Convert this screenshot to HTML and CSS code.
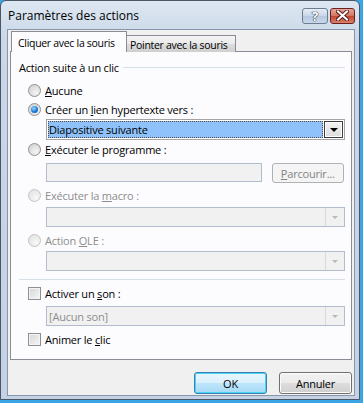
FILE: index.html
```html
<!DOCTYPE html>
<html lang="fr">
<head>
    <meta charset="UTF-8">
    <title>Paramètres des actions</title>
    <link rel="stylesheet" href="styles.css">
</head>
<body>
<div class="screen">
    <div class="window">
        <div class="titlebar">
            <span class="title">Paramètres des actions</span>
            <div class="caption">
                <span class="cbtn help">?</span>
                <span class="cbtn close">
                    <svg width="13" height="11" viewBox="0 0 13 11">
                        <path d="M2 1.5 L11 9.5 M11 1.5 L2 9.5" stroke="#5a1a1a" stroke-width="4" stroke-linecap="square"/>
                        <path d="M2 1.5 L11 9.5 M11 1.5 L2 9.5" stroke="#fff" stroke-width="2" stroke-linecap="square"/>
                    </svg>
                </span>
            </div>
        </div>
        <div class="client">
            <div class="tabs">
                <div class="tab active">Cliquer avec la souris</div>
                <div class="tab">Pointer avec la souris</div>
            </div>
            <div class="panel">
                <div class="group-head"><span>Action suite à un clic</span></div>

                <div class="opt r-aucune"><span class="radio"></span><span><u>A</u>ucune</span></div>
                <div class="opt r-lien"><span class="radio checked"></span><span>Créer un <u>l</u>ien hypertexte vers :</span></div>
                <div class="combo focus">
                    <div class="combo-value"><span>Diapositive suivante</span></div>
                    <div class="combo-btn"><span class="arrow"></span></div>
                </div>

                <div class="opt r-prog"><span class="radio"></span><span><u>E</u>xécuter le programme :</span></div>
                <div class="prog-row">
                    <div class="field"></div>
                    <div class="btn disabled"><u>P</u>arcourir...</div>
                </div>

                <div class="opt r-macro disabled"><span class="radio"></span><span>Exécuter la <u>m</u>acro :</span></div>
                <div class="combo disabled c-macro">
                    <div class="combo-value"></div>
                    <div class="combo-btn"><span class="arrow"></span></div>
                </div>

                <div class="opt r-ole disabled"><span class="radio"></span><span>Action <u>O</u>LE :</span></div>
                <div class="combo disabled c-ole">
                    <div class="combo-value"></div>
                    <div class="combo-btn"><span class="arrow"></span></div>
                </div>

                <div class="sep"></div>

                <div class="opt c-son"><span class="check"></span><span>Activer un <u>s</u>on :</span></div>
                <div class="combo disabled c-sound">
                    <div class="combo-value"><span>[Aucun son]</span></div>
                    <div class="combo-btn"><span class="arrow"></span></div>
                </div>
                <div class="opt c-anim"><span class="check"></span><span>Animer le <u>c</u>lic</span></div>
            </div>
            <div class="footer">
                <div class="btn default">OK</div>
                <div class="btn">Annuler</div>
            </div>
        </div>
    </div>
</div>
</body>
</html>
```

FILE: styles.css
```css
body {
    margin: 0;
    padding: 0;
    font-family: "Open Sans", "Noto Sans", sans-serif;
    font-size: 11px;
    letter-spacing: -0.2px;
    color: #000;
    background: #3aa6e6;
}

.screen {
    width: 363px;
    height: 403px;
    background: #3aa6e6; /* desktop showing behind the glass */
}

.window {
    width: 360px;
    height: 400px;
    box-sizing: border-box;
    border: 1px solid #4a5566;
    border-radius: 6px 6px 0 0;
    background: linear-gradient(#dde7f2, #c9d7e7 40px, #c3d2e4);
    padding: 0 4px 3px 6px;
    display: flex;
    flex-direction: column;
}

.titlebar {
    height: 28px;
    flex: none;
    display: flex;
    align-items: center;
    justify-content: space-between;
    padding-left: 1px;
}

.title {
    font-size: 12px;
    letter-spacing: 0;
    margin-top: 1px;
}

.caption {
    display: flex;
    gap: 2px;
    margin-top: 1px;
}

.cbtn {
    height: 14px;
    border: 1px solid #6d7c90;
    border-radius: 3px;
    display: flex;
    align-items: center;
    justify-content: center;
}

.help {
    width: 24px;
    background: linear-gradient(#e6eef8, #c8d6e8 50%, #b6c8de 51%, #c9d9ec);
    color: #fff;
    font-weight: bold;
    font-size: 13px;
    text-shadow: 0 0 1px #2c3a4c, 0 0 1px #2c3a4c, 0 0 1px #2c3a4c;
    line-height: 14px;
}

.close {
    width: 23px;
    border-color: #6b2020;
    background: linear-gradient(#e8a79a, #d27260 50%, #c2452d 51%, #d9816a);
}

.client {
    flex: 1;
    background: #f0f0f0;
    border: 1px solid #8796aa;
    padding: 1px 2px 0 2px;
    display: flex;
    flex-direction: column;
}

.tabs {
    display: flex;
    align-items: flex-end;
    padding-left: 1px;
    height: 21px;
    flex: none;
    position: relative;
    z-index: 1;
    margin-bottom: -1px;
}

.tab {
    width: 109px;
    min-width: 0;
    flex: none;
    height: 17px;
    box-sizing: border-box;
    border: 1px solid #898c95;
    border-left: none;
    border-bottom: none;
    background: linear-gradient(#f3f3f3, #ebebeb 50%, #dddddd 51%, #cfcfcf);
    display: flex;
    align-items: center;
    padding: 1px 0 0 3px;
    white-space: nowrap;
    overflow: hidden;
    font-size: 10.5px;
    letter-spacing: -0.3px;
}

.tab.active {
    width: 116px;
    height: 21px;
    background: #fcfcfe;
    border-left: 1px solid #898c95;
    padding: 2px 0 0 6px;
}

.panel {
    border: 1px solid #898c95;
    background: #fcfcfe;
    padding: 8px 6px 0 8px;
    height: 309px;
    box-sizing: border-box;
    flex: none;
}

.group-head {
    display: flex;
    align-items: center;
    height: 15px;
    white-space: nowrap;
}

.group-head::after {
    content: "";
    flex: 1;
    height: 1px;
    background: #d5dfe5;
    margin-left: 4px;
}

.opt {
    display: flex;
    align-items: center;
    height: 16px;
    padding-left: 9px;
    white-space: nowrap;
}

.opt.disabled {
    color: #8d8d8d;
}

.radio {
    width: 13px;
    height: 13px;
    box-sizing: border-box;
    border-radius: 50%;
    border: 1px solid #8e9090;
    background: radial-gradient(circle at 65% 70%, #f4f4f4, #d8d8d8 70%);
    margin-right: 4px;
    margin-top: 1px;
    display: flex;
    align-items: center;
    justify-content: center;
    flex: none;
}

.radio.checked::after {
    content: "";
    width: 7px;
    height: 7px;
    border-radius: 50%;
    background: radial-gradient(circle at 40% 35%, #9ad8ff, #1a7ad8 55%, #0f4e9e);
}

.opt.disabled .radio {
    border-color: #c3c3c3;
    background: radial-gradient(circle at 65% 70%, #f8f8f8, #e6e6e6 70%);
}

.check {
    width: 13px;
    height: 13px;
    box-sizing: border-box;
    border: 1px solid #8e8f8f;
    background: linear-gradient(135deg, #d6d6d6, #f6f6f6);
    box-shadow: inset 0 0 0 1px #f4f4f4;
    margin-right: 4px;
    margin-top: 1px;
    flex: none;
}

.r-aucune { margin-top: 7px; }
.r-lien { margin-top: 3px; }
.r-prog { margin-top: 1px; }
.r-macro { margin-top: 4px; }
.r-ole { margin-top: 5px; }
.c-son { margin-top: 5px; }
.c-anim { margin-top: 5px; }

.combo {
    margin-left: 27px;
    height: 21px;
    box-sizing: border-box;
    border: 1px solid #a4a4a4;
    background: #fff;
    display: flex;
    padding: 1px;
    margin-top: 2px;
}

.combo-value {
    flex: 1;
    display: flex;
    align-items: center;
    padding-left: 1px;
}

.combo.focus .combo-value {
    background: #8fc2fa;
    outline: 1px dotted #5a4a3a;
    outline-offset: -1px;
    margin-right: 1px;
}

.combo-btn {
    width: 17px;
    display: flex;
    align-items: center;
    justify-content: center;
}

.combo.focus .combo-btn {
    border: 1px solid #3d3d3d;
    background: linear-gradient(#f4f4f4, #dcdcdc);
    box-shadow: inset 0 0 0 1px #fff;
}

.arrow {
    width: 0;
    height: 0;
    border-left: 4px solid transparent;
    border-right: 4px solid transparent;
    border-top: 4px solid #000;
}

.combo.disabled {
    height: 20px;
    border-color: #b1bdcd;
    background: #f1f1f1;
    color: #8d8d8d;
}

.combo.disabled .combo-btn {
    border-left: 1px solid #dadada;
    margin: -1px -1px -1px 0;
    width: 18px;
}

.combo.disabled .arrow {
    border-left-width: 3px;
    border-right-width: 3px;
    border-top: 3px solid #b8b8b8;
}

.c-macro { margin-top: 4px; }
.c-ole { margin-top: 3px; }
.c-sound { margin-top: 5px; height: 19px; }

.prog-row {
    display: flex;
    margin-left: 27px;
    margin-top: 6px;
    height: 20px;
    gap: 10px;
    padding-right: 1px;
}

.field {
    width: 217px;
    box-sizing: border-box;
    border: 1px solid #b1bdcd;
    background: #f1f1f1;
    margin-bottom: 1px;
}

.btn {
    width: 73px;
    box-sizing: border-box;
    border: 1px solid #707070;
    border-radius: 3px;
    background: linear-gradient(#f2f2f2, #ebebeb 50%, #dddddd 51%, #cfcfcf);
    box-shadow: inset 0 0 0 1px #fbfbfb;
    display: flex;
    align-items: center;
    justify-content: center;
}

.btn.disabled {
    border-color: #adb2b5;
    background: #f4f4f4;
    color: #838383;
    box-shadow: none;
}

.sep {
    height: 1px;
    background: #d5dfe5;
    margin-top: 8px;
}

.footer {
    display: flex;
    justify-content: flex-end;
    gap: 12px;
    margin-top: 12px;
    height: 22px;
    flex: none;
}

.btn.default {
    border-color: #3c7fb1;
    background: linear-gradient(#eaf6fd, #d9f0fc 50%, #bee6fd 51%, #a7d9f5);
    box-shadow: inset 0 0 0 1px #48d4f4;
}
```
